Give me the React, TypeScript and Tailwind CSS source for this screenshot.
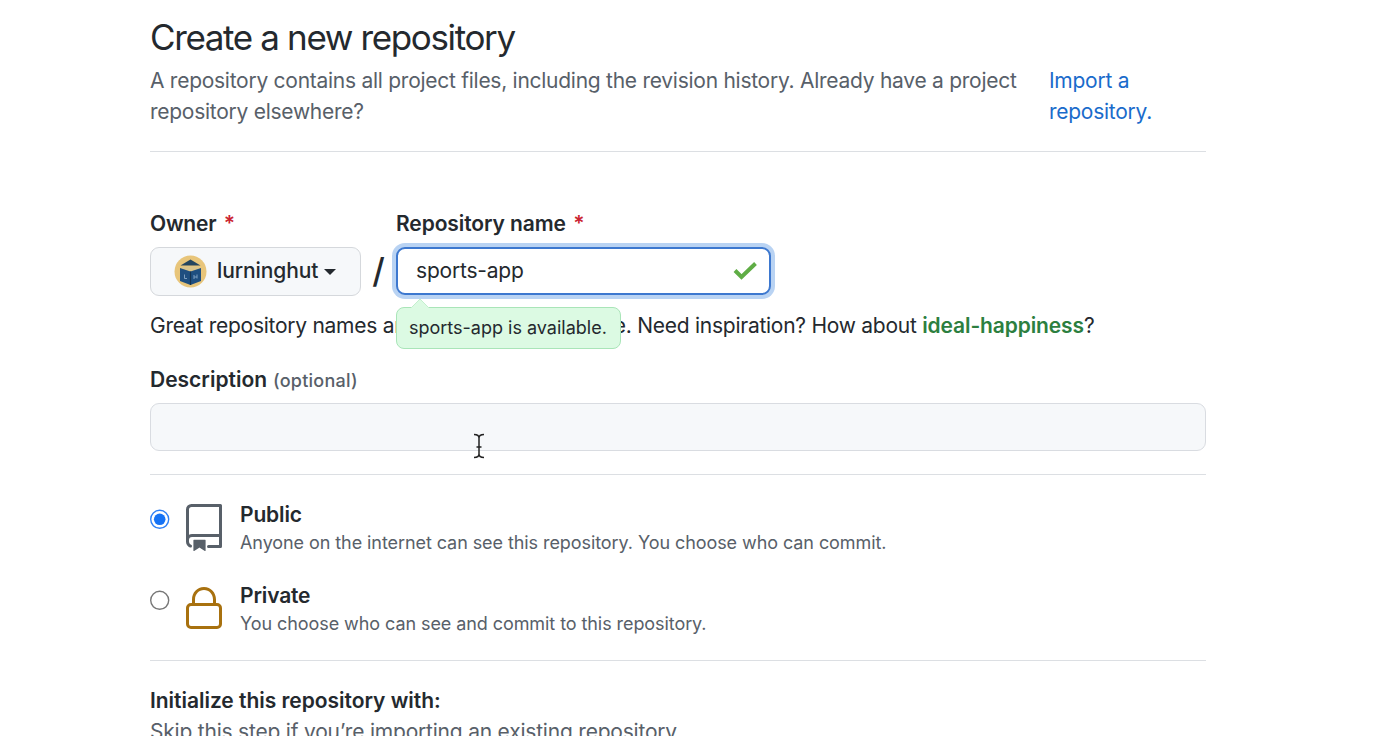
import type { ReactNode } from 'react';

function Divider() {
  return <div className="h-px w-full bg-[#dcdfe3]" />;
}

function Required() {
  return <span className="ml-[7.5px] text-[#cb2431]">*</span>;
}

function Avatar() {
  return (
    <svg width="33" height="33" viewBox="0 0 33 33" className="shrink-0">
      <circle cx="16.5" cy="16.5" r="16" fill="#e8c57a" />
      <path d="M16.5 4.500 26.500 10.500H6.500z" fill="#24455f" />
      <path d="M8 11.500h17v2.500l-8.500 2.500L8 14z" fill="#d9c48c" />
      <path d="M6 13l10.500 3.500L27 13v13l-10.500 4L6 26z" fill="#1f4f80" />
      <path d="M16.500 16.500V30" stroke="#16334f" strokeWidth="1.200" />
      <path d="M10.500 19.500v4h2.500M20 24v-4M23 23.500v-4M20 22h3" stroke="#7d9fc0" strokeWidth="1" fill="none" />
    </svg>
  );
}

function RepoIcon() {
  return (
    <svg width="48" height="48" viewBox="0 0 24 24" fill="#586069">
      <path fillRule="evenodd" d="M3 2.75A2.75 2.75 0 015.75 0h14.5a.75.75 0 01.75.75v20.5a.75.75 0 01-.75.75h-6a.75.75 0 010-1.5h5.250v-4H6A1.5 1.5 0 004.5 18v.75c0 .716.43 1.334 1.050 1.605a.75.75 0 01-.6 1.374A3.250 3.250 0 013 18.750v-16zM19.500 1.500V15H6c-.546 0-1.059.146-1.500.401V2.750c0-.69.56-1.250 1.250-1.250H19.500z" />
      <path d="M6.700 18.150a.25.25 0 01.25-.25h5.600a.25.25 0 01.25.25v5.110a.25.25 0 01-.397.201l-2.506-1.604a.25.25 0 00-.294 0L7.097 23.460a.25.25 0 01-.397-.2v-5.010z" />
    </svg>
  );
}

function LockIcon() {
  return (
    <svg width="48" height="48" viewBox="0 0 24 24" fill="#a8710f">
      <path fillRule="evenodd" d="M6 9V7.250C6 3.845 8.503 1 12 1s6 2.845 6 6.250V9h.5a2.500 2.500 0 012.500 2.500v8a2.500 2.500 0 01-2.500 2.500h-13A2.500 2.500 0 013 19.500v-8A2.500 2.500 0 015.500 9H6zm1.500-1.750C7.500 4.580 9.422 2.500 12 2.500c2.578 0 4.500 2.080 4.500 4.750V9h-9V7.250zm-3 4.250a1 1 0 011-1h13a1 1 0 011 1v8a1 1 0 01-1 1h-13a1 1 0 01-1-1v-8z" />
    </svg>
  );
}

function Radio({ checked }: { checked: boolean }) {
  return (
    <svg width="20" height="20" viewBox="0 0 20 20" className="shrink-0">
      <circle cx="9.700" cy="10.300" r="9" fill="#fff" stroke={checked ? '#2f80f5' : '#777'} strokeWidth="1.400" />
      {checked && <circle cx="9.700" cy="10.300" r="5.800" fill="#1673f5" />}
    </svg>
  );
}

function Visibility({ checked, icon, title, children }: { checked: boolean; icon: ReactNode; title: string; children: ReactNode }) {
  return (
    <div className="flex h-[81px]">
      <div className="w-[30px] pt-[8px]"><Radio checked={checked} /></div>
      <div className="w-[60px] pt-[2.5px]">{icon}</div>
      <div>
        <div className="h-[28px] text-[21px] leading-[28px] font-semibold tracking-[-0.15px]">{title}</div>
        <div className="text-[18px] leading-[28px] tracking-[-0.075px] text-[#586069]">{children}</div>
      </div>
    </div>
  );
}

export default function App() {
  return (
    <div className="h-[736px] overflow-hidden bg-white pl-[150px] font-['Inter',sans-serif] text-[21px] text-[#24292e]">
      <div className="w-[1056px] whitespace-nowrap">
        <h1 className="h-[64px] pt-[13px] text-[35px] leading-[48px] tracking-[-1.37px]">Create a new repository</h1>
        <div className="flex h-[87px] pt-[1px] leading-[31px] tracking-[-0.265px] text-[#586069]">
          <p className="w-[899px]">
            A repository contains all project files, including the revision history. Already have a project
            <br />
            repository elsewhere?
          </p>
          <a className="text-[#1a6bcb]">Import a<br />repository.</a>
        </div>
        <Divider />

        <div className="flex pt-[54px]">
          <div className="w-[211px]">
            <div className="h-[41px] leading-[35px] font-semibold tracking-[-0.21px]">Owner<Required /></div>
            <div className="flex h-[49px] items-center rounded-[9px] border-[1.5px] border-[#d5d8dc] bg-[#f6f8fa] pl-[23px] font-medium">
              <Avatar />
              <span className="ml-[10px] pb-[2px] tracking-[-0.1px]">lurninghut</span>
              <svg width="12" height="6" viewBox="0 0 12 6" className="ml-[6px]"><path d="M0 0h12L6 6z" fill="#24292e" /></svg>
            </div>
          </div>
          <div className="w-[35px] pt-[41px] text-center text-[34px] leading-[48px] font-medium">/</div>
          <div className="relative w-[376px]">
            <div className="h-[41px] leading-[35px] font-semibold tracking-[-0.1px]">Repository name<Required /></div>
            <div className="flex h-[48px] w-[375px] items-center justify-between rounded-[9px] border-2 border-[#3d78cf] bg-white pr-[12px] pl-[18px] shadow-[0_0_0_4px_#b9d3f3]">
              <span className="tracking-[-0.2px]">sports-app</span>
              <svg width="24" height="20" viewBox="0 0 24 20"><path d="M2 9.500 8.500 16 22.500 2.500" fill="none" stroke="#5fad45" strokeWidth="4" /></svg>
            </div>
            <div className="absolute top-[101px] left-0 flex h-[42px] w-[225px] items-center rounded-[8px] border-[1.5px] border-[#a9e5b8] bg-[#dcfae3] pb-[2px] pl-[12px] text-[18px]">
              sports-app is available.
              <svg width="18" height="10" viewBox="0 0 18 10" className="absolute -top-[9px] left-[14px]"><path d="M0 9 9 0l9 9v1H0z" fill="#dcfae3" /><path d="M0 9 9 0l9 9" fill="none" stroke="#c3efce" /></svg>
            </div>
          </div>
        </div>

        <div className="mt-[13px] h-[54px] leading-[33px] tracking-[-0.26px]">
          Great repository names are short and memorable. Need inspiration? How about <b className="font-semibold tracking-[-0.12px] text-[#2c7f3f]">ideal-happiness</b>?
        </div>
        <div className="h-[40px] leading-[33px]"><span className="font-semibold">Description</span> <span className="text-[18px] font-medium tracking-[0.25px] text-[#586069]">(optional)</span></div>
        <div className="relative h-[48px] rounded-[9px] border-[1.5px] border-[#d9dce1] bg-[#f6f8fa]">
          <svg width="12" height="26" viewBox="0 0 12 26" className="absolute top-[29px] left-[322px]">
            <path d="M1 1.500c3 0 5 1 5 3.500 0-2.500 2-3.500 5-3.500M6 5v16M1 24.500c3 0 5-1 5-3.500 0 2.500 2 3.500 5 3.500M3.500 14h5" fill="none" stroke="#222" strokeWidth="1.500" />
          </svg>
        </div>
        <div className="pt-[23px]"><Divider /></div>

        <div className="h-[185px] pt-[26px]">
          <Visibility checked icon={<RepoIcon />} title="Public">Anyone on the internet can see this repository. You choose who can commit.</Visibility>
          <Visibility checked={false} icon={<LockIcon />} title="Private">You choose who can see and commit to this repository.</Visibility>
        </div>
        <Divider />
        <div className="h-[55px] pt-[24px] leading-[31px] font-semibold tracking-[-0.03px]">Initialize this repository with:</div>
        <div className="leading-[31px] tracking-[-0.21px] text-[#586069]">Skip this step if you’re importing an existing repository.</div>
      </div>
    </div>
  );
}
